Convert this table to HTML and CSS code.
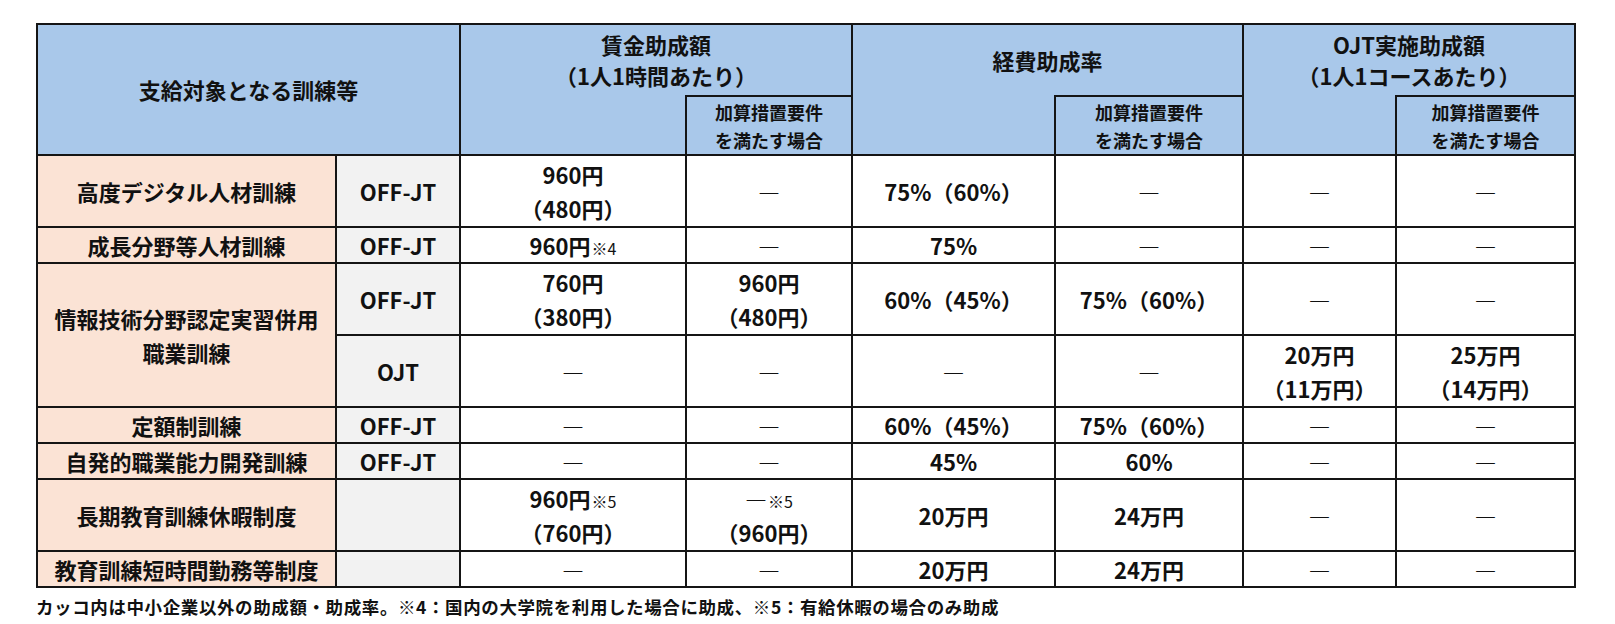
FILE: index.html
```html
<!DOCTYPE html>
<html lang="ja">
<head>
<meta charset="utf-8">
<title>助成額・助成率</title>
<link rel="stylesheet" href="styles.css">
</head>
<body>
<div class="wrap">
  <table class="grant">
    <colgroup>
      <col class="c1"><col class="c2"><col class="c3"><col class="c4">
      <col class="c5"><col class="c6"><col class="c7"><col class="c8">
    </colgroup>
    <thead>
      <tr class="h1">
        <th class="head main" colspan="2" rowspan="2">支給対象となる訓練等</th>
        <th class="head grp" colspan="2">賃金助成額<br>（1人1時間あたり）</th>
        <th class="head grp" colspan="2">経費助成率</th>
        <th class="head grp" colspan="2">OJT実施助成額<br>（1人1コースあたり）</th>
      </tr>
      <tr class="h2">
        <th class="head blank"></th>
        <th class="head sub">加算措置要件<br>を満たす場合</th>
        <th class="head blank"></th>
        <th class="head sub">加算措置要件<br>を満たす場合</th>
        <th class="head blank"></th>
        <th class="head sub">加算措置要件<br>を満たす場合</th>
      </tr>
    </thead>
    <tbody>
      <tr class="tall">
        <th class="cat">高度デジタル人材訓練</th>
        <td class="type">OFF-JT</td>
        <td>960円<br>（480円）</td>
        <td>―</td>
        <td>75%（60%）</td>
        <td>―</td>
        <td>―</td>
        <td>―</td>
      </tr>
      <tr class="short">
        <th class="cat">成長分野等人材訓練</th>
        <td class="type">OFF-JT</td>
        <td>960円<span class="note">※4</span></td>
        <td>―</td>
        <td>75%</td>
        <td>―</td>
        <td>―</td>
        <td>―</td>
      </tr>
      <tr class="tall">
        <th class="cat" rowspan="2">情報技術分野認定実習併用<br>職業訓練</th>
        <td class="type">OFF-JT</td>
        <td>760円<br>（380円）</td>
        <td>960円<br>（480円）</td>
        <td>60%（45%）</td>
        <td>75%（60%）</td>
        <td>―</td>
        <td>―</td>
      </tr>
      <tr class="tall">
        <td class="type">OJT</td>
        <td>―</td>
        <td>―</td>
        <td>―</td>
        <td>―</td>
        <td>20万円<br>（11万円）</td>
        <td>25万円<br>（14万円）</td>
      </tr>
      <tr class="short">
        <th class="cat">定額制訓練</th>
        <td class="type">OFF-JT</td>
        <td>―</td>
        <td>―</td>
        <td>60%（45%）</td>
        <td>75%（60%）</td>
        <td>―</td>
        <td>―</td>
      </tr>
      <tr class="short">
        <th class="cat">自発的職業能力開発訓練</th>
        <td class="type">OFF-JT</td>
        <td>―</td>
        <td>―</td>
        <td>45%</td>
        <td>60%</td>
        <td>―</td>
        <td>―</td>
      </tr>
      <tr class="tall">
        <th class="cat">長期教育訓練休暇制度</th>
        <td class="type"></td>
        <td>960円<span class="note">※5</span><br>（760円）</td>
        <td>―<span class="note">※5</span><br>（960円）</td>
        <td>20万円</td>
        <td>24万円</td>
        <td>―</td>
        <td>―</td>
      </tr>
      <tr class="short">
        <th class="cat">教育訓練短時間勤務等制度</th>
        <td class="type"></td>
        <td>―</td>
        <td>―</td>
        <td>20万円</td>
        <td>24万円</td>
        <td>―</td>
        <td>―</td>
      </tr>
    </tbody>
  </table>
  <p class="footnote">カッコ内は中小企業以外の助成額・助成率。※4：国内の大学院を利用した場合に助成、※5：有給休暇の場合のみ助成</p>
</div>
</body>
</html>
```

FILE: styles.css
```css
html, body {
  margin: 0;
  padding: 0;
  background: #ffffff;
}

body {
  font-family: "Noto Sans CJK JP", "Noto Sans", sans-serif;
  color: #111111;
}

.wrap {
  padding: 23px 0 0 36px;
}

.grant {
  border-collapse: collapse;
  table-layout: fixed;
  width: 1538px;
  font-size: 22px;
  font-weight: 700;
}

.c1 { width: 299px; }
.c2 { width: 124px; }
.c3 { width: 226px; }
.c4 { width: 166px; }
.c5 { width: 203px; }
.c6 { width: 188px; }
.c7 { width: 153px; }
.c8 { width: 179px; }

.grant th,
.grant td {
  border: 2px solid #151515;
  padding: 0;
  text-align: center;
  vertical-align: middle;
  line-height: 30px;
  font-weight: 700;
  white-space: nowrap;
}

.head {
  background: #a9c8ea;
}

.h1 { height: 72px; }
.h2 { height: 59px; }

.grant .grp {
  border-bottom: none;
  line-height: 31px;
}

.grant .blank {
  border-top: none;
}

.grant .sub {
  font-size: 18px;
  line-height: 28px;
}

.grant .main {
  line-height: 31px;
}

.tall { height: 72px; }
.short { height: 36px; }

.grant .tall > th,
.grant .tall > td {
  line-height: 34px;
}

.cat {
  background: #fbe3d5;
}

.type {
  background: #f2f2f2;
}

.note {
  font-size: 16px;
  font-weight: 400;
  line-height: 1;
  margin-left: 1px;
}

.footnote {
  margin: 0;
  padding-top: 7px;
  font-size: 17.5px;
  line-height: 24px;
  font-weight: 700;
  letter-spacing: 0.6px;
  color: #111111;
}
```
